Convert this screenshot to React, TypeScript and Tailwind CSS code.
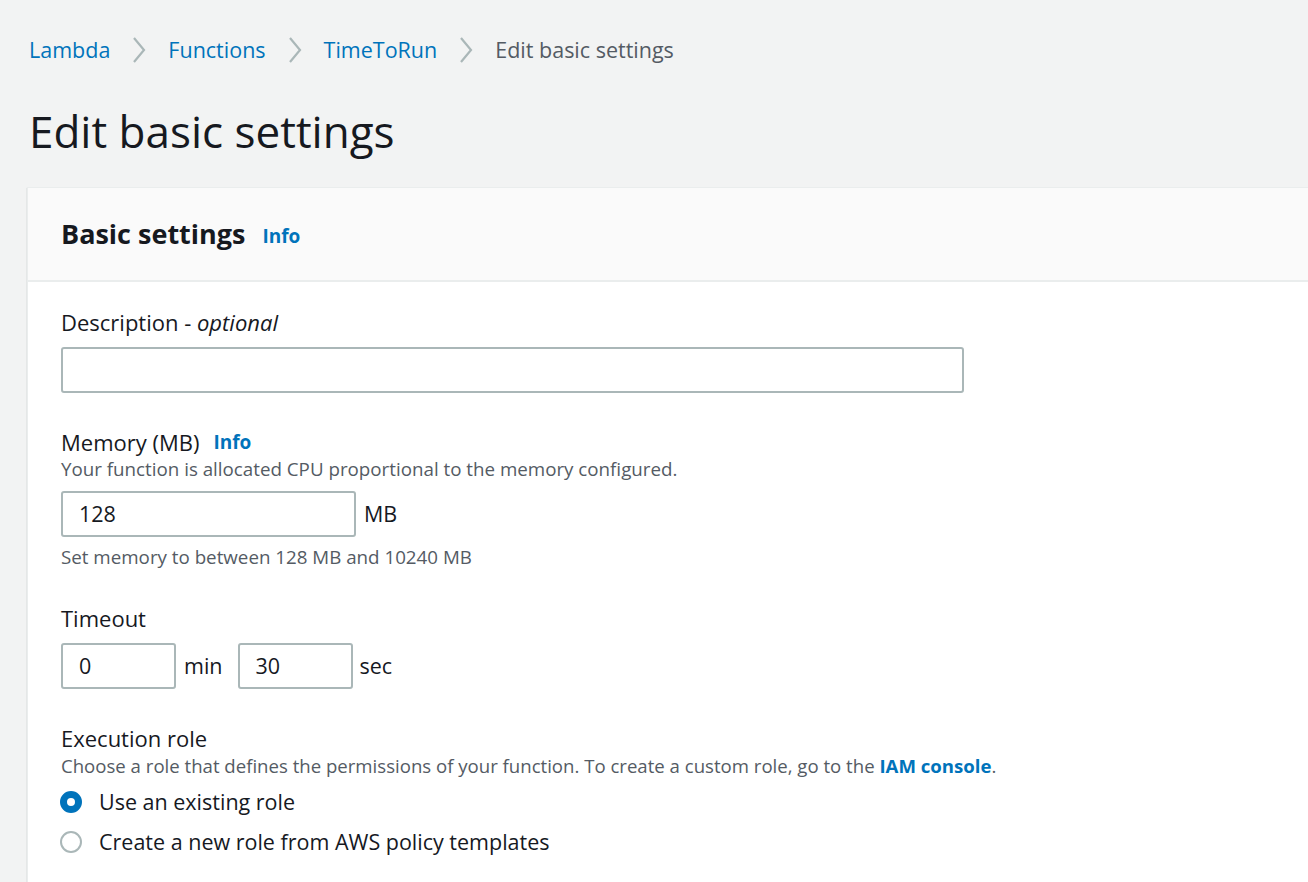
function Info({ gap }: { gap: string }) {
  return <span className={`${gap} text-[19px] font-bold text-[#0073bb]`}>Info</span>;
}

function Chevron() {
  return (
    <svg width="14" height="26" viewBox="0 0 14 26" className="mx-[22px]">
      <polyline points="2,1 12,13 2,25" fill="none" stroke="#aab7b8" strokeWidth="2.2" />
    </svg>
  );
}

function Field({ value, width }: { value: string; width: string }) {
  return (
    <div
      className={`${width} h-[46px] rounded-[3px] border-2 border-[#aab7b8] bg-white pl-[16px] flex items-center text-[21.5px] text-[#16191f]`}
    >
      {value}
    </div>
  );
}

function Radio({ checked, label }: { checked?: boolean; label: string }) {
  return (
    <div className="flex items-center h-[40px] -ml-px">
      {checked ? (
        <span className="w-[22px] h-[22px] rounded-full border-[7px] border-[#0073bb] bg-white" />
      ) : (
        <span className="w-[22px] h-[22px] rounded-full border-2 border-[#aab7b8] bg-white" />
      )}
      <span className="ml-[17px] text-[21.5px] text-[#16191f]">{label}</span>
    </div>
  );
}

export default function App() {
  const crumbs = ["Lambda", "Functions", "TimeToRun"];

  return (
    <div
      className="min-h-screen h-[882px] overflow-hidden bg-[#f2f3f3] text-[#16191f]"
      style={{ fontFamily: '"Open Sans", "Noto Sans", sans-serif' }}
    >
      <nav className="flex items-center pl-[29px] pt-[34px] h-[66px] text-[21.5px]">
        {crumbs.map((c) => (
          <span key={c} className="flex items-center">
            <span className="text-[#0073bb]">{c}</span>
            <Chevron />
          </span>
        ))}
        <span className="text-[#545b64]">Edit basic settings</span>
      </nav>

      <h1 className="pl-[29px] mt-[37px] text-[44px] leading-[56px]">Edit basic settings</h1>

      <div className="ml-[27px] mt-[28px] border-t border-l border-[#eaeded] bg-white shadow-[0_1px_1px_0_rgba(0,28,36,0.3)]">
        <div className="h-[94px] bg-[#fafafa] border-b-2 border-[#eaeded] pl-[33px] flex items-center">
          <span className="text-[27px] font-bold">Basic settings</span>
          <Info gap="ml-[17px] mt-[4px]" />
        </div>

        <div className="pl-[33px] pt-[25px] pb-[40px]">
          <div className="text-[22px] leading-[30px]">
            Description - <span className="italic">optional</span>
          </div>
          <div className="mt-[10px]">
            <Field value="" width="w-[903px]" />
          </div>

          <div className="mt-[34px] flex items-center text-[22px] leading-[30px]">
            Memory (MB)
            <Info gap="ml-[14px]" />
          </div>
          <div className="text-[18.75px] leading-[24px] text-[#545b64]">
            Your function is allocated CPU proportional to the memory configured.
          </div>
          <div className="mt-[10px] flex items-center">
            <Field value="128" width="w-[295px]" />
            <span className="ml-[8px] text-[21.5px]">MB</span>
          </div>
          <div className="mt-[8px] text-[18.75px] leading-[24px] text-[#545b64]">
            Set memory to between 128 MB and 10240 MB
          </div>

          <div className="mt-[34px] text-[22px] leading-[30px]">Timeout</div>
          <div className="mt-[10px] flex items-center">
            <Field value="0" width="w-[115px]" />
            <span className="ml-[8px] mr-[15px] text-[21.5px]">min</span>
            <Field value="30" width="w-[115px]" />
            <span className="ml-[7px] text-[21.5px]">sec</span>
          </div>

          <div className="mt-[34px] text-[22px] leading-[30px]">Execution role</div>
          <div className="mt-[1px] text-[18.6px] leading-[24px] text-[#545b64]">
            Choose a role that defines the permissions of your function. To create a custom role, go to the{" "}
            <span className="font-bold text-[#0073bb]">IAM console</span>.
          </div>
          <div className="mt-[4px]">
            <Radio checked label="Use an existing role" />
            <Radio label="Create a new role from AWS policy templates" />
          </div>
        </div>
      </div>
    </div>
  );
}
